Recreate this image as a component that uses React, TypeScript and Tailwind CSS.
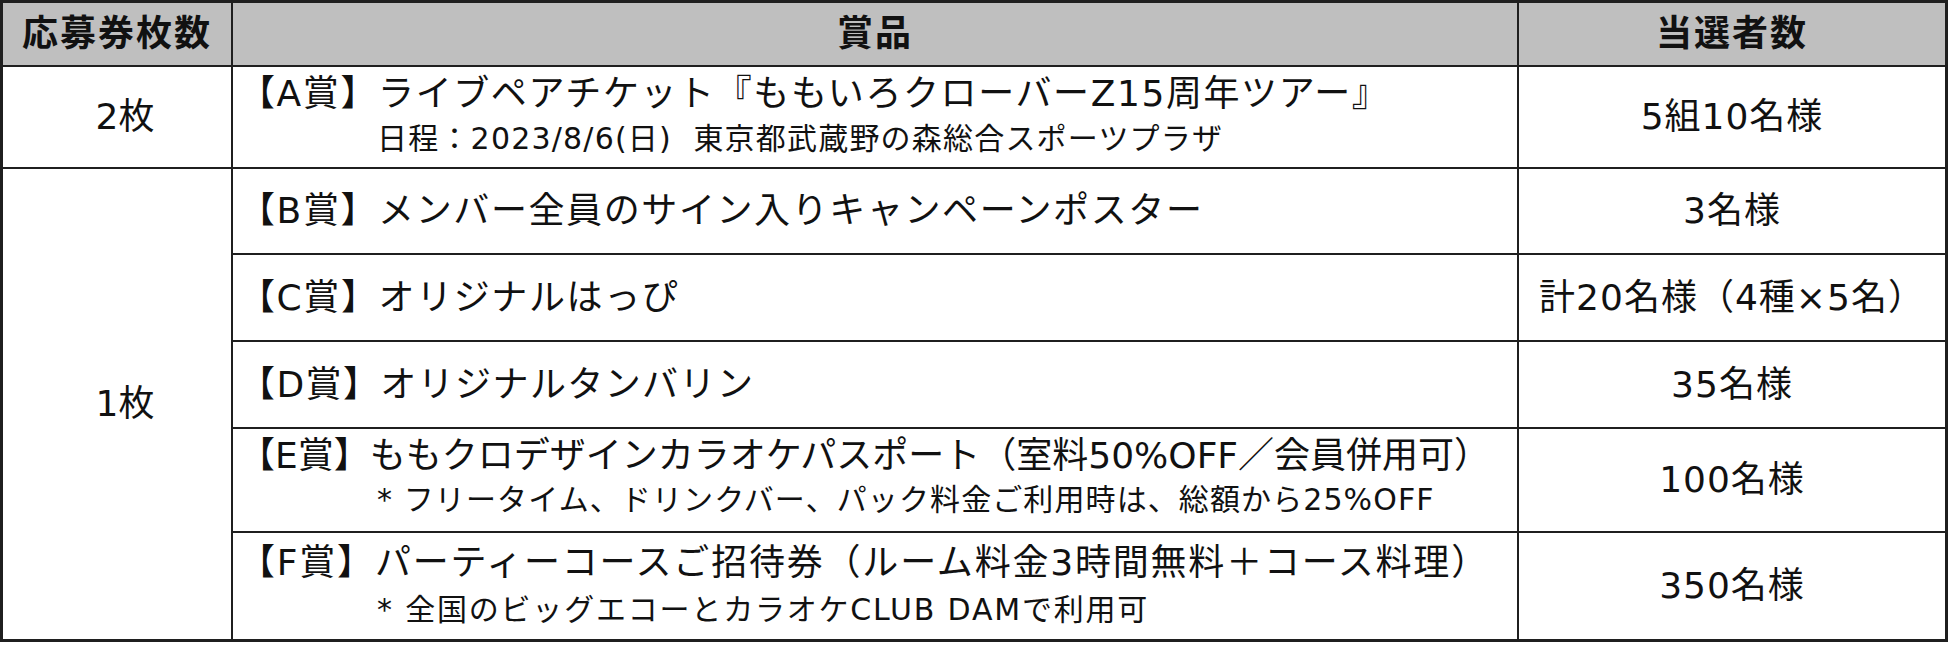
const FONT = "font-['DejaVu_Sans','Noto_Sans_CJK_JP',sans-serif]";

const line = 'border-[#1f1f1f]';

type PrizeProps = {
  main: string;
  sub?: string;
  track: string;
  subTrack?: string;
  pt?: string;
  mainLh?: string;
  subLh?: string;
  bottom?: boolean;
};

const Prize = ({ main, sub, track, subTrack, pt, mainLh, subLh, bottom = true }: PrizeProps) => {
  if (!sub) {
    return (
      <div className={`${line} border-r-2 ${bottom ? 'border-b-2' : ''} flex items-center pl-[6px] text-[36px] leading-[44px] ${track}`}>
        {main}
      </div>
    );
  }
  return (
    <div className={`${line} border-r-2 ${bottom ? 'border-b-2' : ''} flex flex-col pl-[6px] ${pt}`}>
      <div className={`text-[36px] ${track} ${mainLh}`}>{main}</div>
      <div className={`pl-[138px] text-[30px] whitespace-pre ${subTrack} ${subLh}`}>{sub}</div>
    </div>
  );
};

const Count = ({ text, last }: { text: string; last?: boolean }) => (
  <div className={`${line} flex items-center justify-center text-[36px] tracking-[1px] ${last ? '' : 'border-b-2'}`}>{text}</div>
);

export default function App() {
  return (
    <div className={`w-[1950px] h-[647px] bg-white text-[#111] ${FONT}`}>
      <div className="w-[1948px] h-[642px] border-[3px] border-[#1f1f1f] grid grid-cols-[230px_1286px_1fr] grid-rows-[64px_102px_86px_87px_87px_104px_106px]">
        {/* header */}
        <div className={`${line} flex items-center justify-center border-r-2 border-b-2 bg-[#bfbfbf] font-bold text-[36px] tracking-[2px]`}>応募券枚数</div>
        <div className={`${line} flex items-center justify-center border-r-2 border-b-2 bg-[#bfbfbf] font-bold text-[36px] tracking-[2px]`}>賞品</div>
        <div className={`${line} flex items-center justify-center border-b-2 bg-[#bfbfbf] font-bold text-[36px] tracking-[2px]`}>当選者数</div>

        {/* 2枚 */}
        <div className={`${line} flex items-center justify-center border-r-2 border-b-2 pl-[16px] text-[36px]`}>2枚</div>
        <Prize
          main="【A賞】ライブペアチケット『ももいろクローバーZ15周年ツアー』"
          sub={'日程：2023/8/6(日)  東京都武蔵野の森総合スポーツプラザ'}
          track="tracking-[1.6px]"
          subTrack="tracking-[1.2px]"
          pt="pt-[5px]"
          mainLh="leading-[44px]"
          subLh="leading-[46px]"
        />
        <Count text="5組10名様" />

        {/* 1枚 */}
        <div className={`${line} flex items-center justify-center border-r-2 row-span-5 pl-[16px] text-[36px]`}>1枚</div>

        <Prize main="【B賞】メンバー全員のサイン入りキャンペーンポスター" track="tracking-[1.6px]" />
        <Count text="3名様" />

        <Prize main="【C賞】オリジナルはっぴ" track="tracking-[1.6px]" />
        <Count text="計20名様（4種×5名）" />

        <Prize main="【D賞】オリジナルタンバリン" track="tracking-[1.4px]" />
        <Count text="35名様" />

        <Prize
          main="【E賞】ももクロデザインカラオケパスポート（室料50%OFF／会員併用可）"
          sub="* フリータイム、ドリンクバー、パック料金ご利用時は、総額から25%OFF"
          track="tracking-[0px]"
          subTrack="tracking-[1.1px]"
          pt="pt-[5px]"
          mainLh="leading-[44px]"
          subLh="leading-[44px]"
        />
        <Count text="100名様" />

        <Prize
          main="【F賞】パーティーコースご招待券（ルーム料金3時間無料＋コース料理）"
          sub="* 全国のビッグエコーとカラオケCLUB DAMで利用可"
          track="tracking-[1.8px]"
          subTrack="tracking-[1.8px]"
          pt="pt-[5px]"
          mainLh="leading-[50px]"
          subLh="leading-[44px]"
          bottom={false}
        />
        <Count text="350名様" last />
      </div>
    </div>
  );
}
